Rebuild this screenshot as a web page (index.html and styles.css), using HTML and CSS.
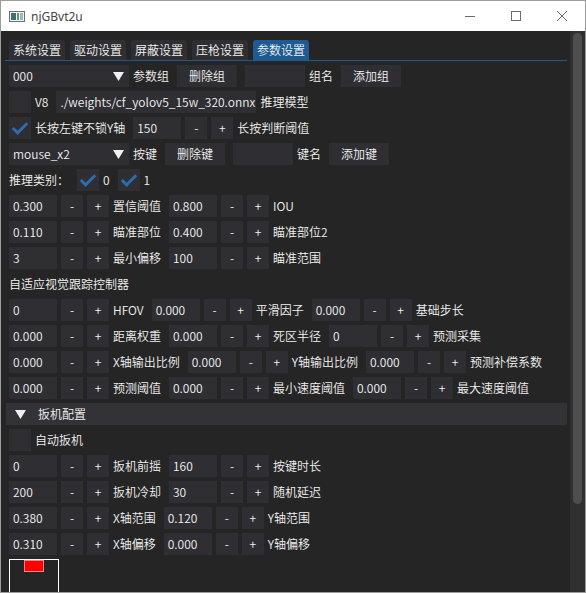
FILE: index.html
```html
<!DOCTYPE html>
<html lang="zh-CN">
<head>
<meta charset="utf-8">
<title>njGBvt2u</title>
<link rel="stylesheet" href="styles.css">
</head>
<body>
<div class="win">
  <div class="titlebar">
    <svg class="app-icon" width="16" height="11" viewBox="0 0 16 11">
      <rect x="0.5" y="0.5" width="15" height="10" fill="#f2f2f2" stroke="#6f6f6f"/>
      <rect x="2" y="2" width="5" height="7" fill="#3f6f73"/>
      <rect x="8" y="2" width="2" height="7" fill="#5a9a7a"/>
      <rect x="11" y="2" width="3" height="7" fill="#9fb4c8"/>
    </svg>
    <span class="title">njGBvt2u</span>
    <div class="controls">
      <div class="ctl"><svg width="10" height="10" viewBox="0 0 10 10"><line x1="0" y1="5.5" x2="10" y2="5.5" stroke="#6a6a6a" stroke-width="1"/></svg></div>
      <div class="ctl"><svg width="10" height="10" viewBox="0 0 10 10"><rect x="0.5" y="0.5" width="9" height="9" fill="none" stroke="#6a6a6a" stroke-width="1"/></svg></div>
      <div class="ctl"><svg width="10" height="10" viewBox="0 0 10 10"><path d="M0 0 L10 10 M10 0 L0 10" stroke="#6a6a6a" stroke-width="1"/></svg></div>
    </div>
  </div>
  <div class="client">
    <div class="content">
      <div class="tabbar">
        <div class="tab">系统设置</div>
        <div class="tab">驱动设置</div>
        <div class="tab">屏蔽设置</div>
        <div class="tab">压枪设置</div>
        <div class="tab active">参数设置</div>
      </div>

      <div class="row">
        <div class="g"><div class="combo"><span>000</span><svg width="11" height="9" viewBox="0 0 11 9"><polygon points="0,0 11,0 5.5,9" fill="#f0f0f0"/></svg></div><span>参数组</span></div>
        <div class="btn w60">删除组</div>
        <div class="g"><div class="in w60"></div><span>组名</span></div>
        <div class="btn w60">添加组</div>
      </div>

      <div class="row">
        <div class="g"><div class="chk"></div><span>V8</span></div>
        <div class="g"><div class="in w200">./weights/cf_yolov5_15w_320.onnx</div><span>推理模型</span></div>
      </div>

      <div class="row">
        <div class="g"><div class="chk"><svg width="22" height="22" viewBox="0 0 22 22"><polyline points="3.8,11 8.6,15.8 18.2,6.2" fill="none" stroke="#2d6cad" stroke-width="3"/></svg></div><span>长按左键不锁Y轴</span></div>
        <div class="g"><div class="in">150</div><div class="btn sq">-</div><div class="btn sq">+</div><span>长按判断阈值</span></div>
      </div>

      <div class="row">
        <div class="g"><div class="combo"><span>mouse_x2</span><svg width="11" height="9" viewBox="0 0 11 9"><polygon points="0,0 11,0 5.5,9" fill="#f0f0f0"/></svg></div><span>按键</span></div>
        <div class="btn w60">删除键</div>
        <div class="g"><div class="in w60"></div><span>键名</span></div>
        <div class="btn w60">添加键</div>
      </div>

      <div class="row">
        <span>推理类别：</span>
        <div class="g"><div class="chk"><svg width="22" height="22" viewBox="0 0 22 22"><polyline points="3.8,11 8.6,15.8 18.2,6.2" fill="none" stroke="#2d6cad" stroke-width="3"/></svg></div><span>0</span></div>
        <div class="g"><div class="chk"><svg width="22" height="22" viewBox="0 0 22 22"><polyline points="3.8,11 8.6,15.8 18.2,6.2" fill="none" stroke="#2d6cad" stroke-width="3"/></svg></div><span>1</span></div>
      </div>

      <div class="row">
        <div class="g"><div class="in">0.300</div><div class="btn sq">-</div><div class="btn sq">+</div><span>置信阈值</span></div>
        <div class="g"><div class="in">0.800</div><div class="btn sq">-</div><div class="btn sq">+</div><span>IOU</span></div>
      </div>
      <div class="row">
        <div class="g"><div class="in">0.110</div><div class="btn sq">-</div><div class="btn sq">+</div><span>瞄准部位</span></div>
        <div class="g"><div class="in">0.400</div><div class="btn sq">-</div><div class="btn sq">+</div><span>瞄准部位2</span></div>
      </div>
      <div class="row">
        <div class="g"><div class="in">3</div><div class="btn sq">-</div><div class="btn sq">+</div><span>最小偏移</span></div>
        <div class="g"><div class="in">100</div><div class="btn sq">-</div><div class="btn sq">+</div><span>瞄准范围</span></div>
      </div>

      <div class="row"><span>自适应视觉跟踪控制器</span></div>

      <div class="row">
        <div class="g"><div class="in">0</div><div class="btn sq">-</div><div class="btn sq">+</div><span>HFOV</span></div>
        <div class="g"><div class="in">0.000</div><div class="btn sq">-</div><div class="btn sq">+</div><span>平滑因子</span></div>
        <div class="g"><div class="in">0.000</div><div class="btn sq">-</div><div class="btn sq">+</div><span>基础步长</span></div>
      </div>
      <div class="row">
        <div class="g"><div class="in">0.000</div><div class="btn sq">-</div><div class="btn sq">+</div><span>距离权重</span></div>
        <div class="g"><div class="in">0.000</div><div class="btn sq">-</div><div class="btn sq">+</div><span>死区半径</span></div>
        <div class="g"><div class="in">0</div><div class="btn sq">-</div><div class="btn sq">+</div><span>预测采集</span></div>
      </div>
      <div class="row">
        <div class="g"><div class="in">0.000</div><div class="btn sq">-</div><div class="btn sq">+</div><span>X轴输出比例</span></div>
        <div class="g"><div class="in">0.000</div><div class="btn sq">-</div><div class="btn sq">+</div><span>Y轴输出比例</span></div>
        <div class="g"><div class="in">0.000</div><div class="btn sq">-</div><div class="btn sq">+</div><span>预测补偿系数</span></div>
      </div>
      <div class="row">
        <div class="g"><div class="in">0.000</div><div class="btn sq">-</div><div class="btn sq">+</div><span>预测阈值</span></div>
        <div class="g"><div class="in">0.000</div><div class="btn sq">-</div><div class="btn sq">+</div><span>最小速度阈值</span></div>
        <div class="g"><div class="in">0.000</div><div class="btn sq">-</div><div class="btn sq">+</div><span>最大速度阈值</span></div>
      </div>

      <div class="header"><svg width="11" height="9" viewBox="0 0 11 9"><polygon points="0,0 11,0 5.5,9" fill="#f0f0f0"/></svg><span>扳机配置</span></div>

      <div class="row">
        <div class="g"><div class="chk"></div><span>自动扳机</span></div>
      </div>
      <div class="row">
        <div class="g"><div class="in">0</div><div class="btn sq">-</div><div class="btn sq">+</div><span>扳机前摇</span></div>
        <div class="g"><div class="in">160</div><div class="btn sq">-</div><div class="btn sq">+</div><span>按键时长</span></div>
      </div>
      <div class="row">
        <div class="g"><div class="in">200</div><div class="btn sq">-</div><div class="btn sq">+</div><span>扳机冷却</span></div>
        <div class="g"><div class="in">30</div><div class="btn sq">-</div><div class="btn sq">+</div><span>随机延迟</span></div>
      </div>
      <div class="row">
        <div class="g"><div class="in">0.380</div><div class="btn sq">-</div><div class="btn sq">+</div><span>X轴范围</span></div>
        <div class="g"><div class="in">0.120</div><div class="btn sq">-</div><div class="btn sq">+</div><span>Y轴范围</span></div>
      </div>
      <div class="row">
        <div class="g"><div class="in">0.310</div><div class="btn sq">-</div><div class="btn sq">+</div><span>X轴偏移</span></div>
        <div class="g"><div class="in">0.000</div><div class="btn sq">-</div><div class="btn sq">+</div><span>Y轴偏移</span></div>
      </div>

      <div class="canvas"><div class="target"></div></div>
    </div>
    <div class="scroll"><div class="thumb"></div></div>
  </div>
</div>
</body>
</html>
```

FILE: styles.css
```css
* { box-sizing: border-box; }
html, body { margin: 0; padding: 0; background: #ffffff; }
body {
  font-family: "Noto Sans CJK SC", "Noto Sans", sans-serif;
  font-size: 12px;
  font-weight: 350;
}
.win {
  width: 586px;
  height: 593px;
  border: 1px solid #9c9c9c;
  display: flex;
  flex-direction: column;
  overflow: hidden;
}
.titlebar {
  height: 30px;
  flex: none;
  background: #ffffff;
  display: flex;
  align-items: center;
}
.app-icon { margin-left: 8px; display: block; }
.title {
  margin-left: 6px;
  font-family: "Noto Sans", "Liberation Sans", sans-serif;
  font-size: 12px;
  font-weight: 400;
  color: #444444;
}
.controls { margin-left: auto; display: flex; }
.ctl {
  width: 46px;
  height: 30px;
  display: flex;
  align-items: center;
  justify-content: center;
}
.ctl svg { display: block; }
.client {
  flex: 1;
  display: flex;
  background: #252525;
  overflow: hidden;
}
.content {
  flex: 1;
  min-width: 0;
  padding: 9px 7px 0 8px;
  display: flex;
  flex-direction: column;
  gap: 4px;
  overflow: hidden;
  color: #f2f2f2;
}
.tabbar {
  flex: none;
  display: flex;
  gap: 5px;
  margin: 0 -4px;
  padding-left: 4px;
  border-bottom: 1px solid #1d5b92;
}
.tab {
  width: 56px;
  height: 20px;
  line-height: 20px;
  text-align: center;
  background: #2e2e33;
  border-radius: 3px 3px 0 0;
}
.tab.active { background: #1d5b92; }
.row {
  flex: none;
  height: 22px;
  display: flex;
  align-items: center;
  gap: 8px;
  white-space: nowrap;
  line-height: 22px;
}
.g { display: flex; align-items: center; gap: 4px; }
.in {
  width: 48px;
  height: 22px;
  padding: 0 4px;
  background: #2e2e33;
  overflow: hidden;
}
.w60 { width: 60px; }
.w200 { width: 200px; }
.btn {
  height: 22px;
  background: #2e2e33;
  text-align: center;
}
.sq { width: 22px; }
.combo {
  width: 120px;
  height: 22px;
  padding: 0 5px 0 4px;
  background: #2e2e33;
  display: flex;
  align-items: center;
  justify-content: space-between;
}
.combo svg, .header svg { display: block; }
.chk {
  width: 22px;
  height: 22px;
  background: #2e2e33;
}
.chk svg { display: block; }
.header {
  flex: none;
  height: 22px;
  margin: 0 -4px 0 -3px;
  padding-left: 9px;
  background: #323237;
  display: flex;
  align-items: center;
  gap: 12px;
  line-height: 22px;
}
.canvas {
  flex: none;
  position: relative;
  width: 50px;
  height: 50px;
  border: 1px solid #ffffff;
}
.target {
  position: absolute;
  left: 14px;
  top: 0;
  width: 20px;
  height: 12px;
  background: #ff0000;
  border: 1px solid #ff8080;
}
.scroll {
  width: 15px;
  flex: none;
  background: #303030;
  padding: 2px 0 0 3px;
}
.thumb {
  width: 9px;
  height: 471px;
  background: #4e4e4e;
  border-radius: 5px;
}
```
